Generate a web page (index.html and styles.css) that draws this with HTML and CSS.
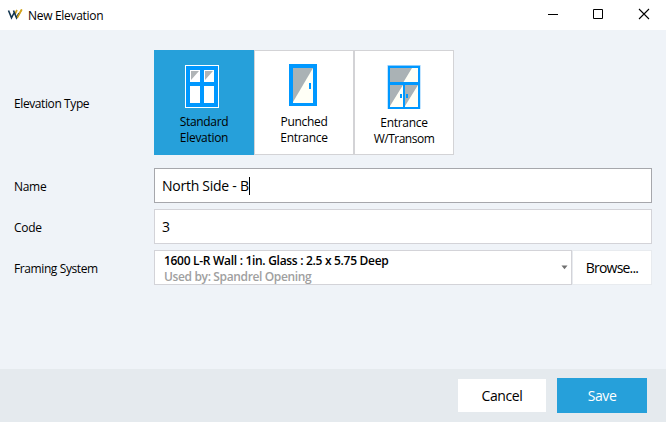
FILE: index.html
```html
<!DOCTYPE html>
<html lang="en">
<head>
<meta charset="utf-8">
<title>New Elevation</title>
<link rel="stylesheet" href="styles.css">
</head>
<body>
<div class="window">
  <header class="titlebar">
    <svg class="logo" width="16" height="12" viewBox="0 0 16 12" fill="none">
      <path d="M10 10L14.800 1.500M8 6L10 2" stroke="#d2a51e" stroke-width="1.7"/>
      <path d="M1.500 2.500L4.500 9.800L7.500 4M6.500 2.500L9.500 9.800L12 5" stroke="#12354f" stroke-width="1.6"/>
      <path d="M10.200 9.500L14.700 1.500" stroke="#d2a51e" stroke-width="1.5"/>
    </svg>
    <h1 class="title"><span class="t-title">New Elevation</span></h1>
    <div class="controls">
      <svg width="46" height="30" viewBox="0 0 46 30"><path d="M18 14.500H28" stroke="#000"/></svg>
      <svg width="46" height="30" viewBox="0 0 46 30"><path d="M17.500 9.500H26.500V18.500H17.500Z" fill="none" stroke="#000"/></svg>
      <svg width="44" height="30" viewBox="0 0 44 30"><path d="M17 9L27 19M27 9L17 19" stroke="#000" stroke-width="1.1"/></svg>
    </div>
  </header>
  <main class="form">
    <div class="row row-types">
      <span class="label"><span class="t-type">Elevation Type</span></span>
      <div class="tiles">
        <button class="tile selected">
          <svg width="40" height="46" viewBox="0 0 40 46">
            <path d="M1 1H35V44H1Z" fill="#fff"/><path d="M2 2H34V43H2Z" fill="#0098ff"/>
            <path d="M6 6H16V18H6ZM20 6H30V18H20ZM6 22H16V39H6ZM20 22H30V39H20Z" fill="#fff"/>
            <path d="M7 7H15L7 16ZM21 7H29L21 16Z" fill="#b0b4b6"/>
          </svg>
          <span class="caption"><span class="t-std">Standard</span><br><span class="t-elev">Elevation</span></span>
        </button>
        <button class="tile">
          <svg width="38" height="46" viewBox="0 0 38 46">
            <path d="M4 0H32V42H4Z" fill="#0098ff"/><path d="M8 4H28V39H8Z" fill="#fffff6"/>
            <path d="M8 4H28L8 38Z" fill="#aab2b5"/><path d="M24 19H26V25H24Z" fill="#0098ff"/>
          </svg>
          <span class="caption"><span class="t-punch">Punched</span><br><span class="t-entr">Entrance</span></span>
        </button>
        <button class="tile tile-transom">
          <svg width="36" height="46" viewBox="0 0 36 46">
            <path d="M1.500 1H34.500V45H1.500Z" fill="#8accff"/><path d="M2 2H34V45H2Z" fill="#0098ff"/>
            <path d="M4 4H32V18H4ZM4 21H17V43H4ZM19 21H32V43H19Z" fill="#fffff6"/>
            <path d="M4 4H26L17.500 18H4ZM4 21H17L4 42ZM19 21H32L19 42Z" fill="#aab2b5"/>
            <path d="M14 30H16V34H14ZM20 30H22V34H20Z" fill="#0098ff"/>
          </svg>
          <span class="caption"><span class="t-entr">Entrance</span><br><span class="t-trans">W/Transom</span></span>
        </button>
      </div>
    </div>
    <div class="row">
      <span class="label"><span class="t-name">Name</span></span>
      <div class="field focused"><span class="t-north">North Side - B</span><i class="caret"></i></div>
    </div>
    <div class="row">
      <span class="label"><span class="t-code">Code</span></span>
      <div class="field"><span>3</span></div>
    </div>
    <div class="row">
      <span class="label"><span class="t-frame">Framing System</span></span>
      <div class="select">
        <div class="system"><span class="t-sys">1600 L-R Wall : 1in. Glass : 2.5 x 5.75 Deep</span><br><span class="used t-used">Used by: Spandrel Opening</span></div>
        <svg width="7" height="5" viewBox="0 0 7 5"><path d="M0.500 0.500H6.500L3.500 4.300Z" fill="#707070"/></svg>
      </div>
      <button class="browse"><span class="t-browse">Browse...</span></button>
    </div>
  </main>
  <footer class="footer">
    <button class="btn cancel"><span class="t-cancel">Cancel</span></button>
    <button class="btn save"><span class="t-save">Save</span></button>
  </footer>
</div>
</body>
</html>
```
FILE: styles.css
```css
* { box-sizing: border-box; }
body { margin: 0; font: 12px/16px "Open Sans", "Noto Sans", sans-serif; color: #000; }
button { font: inherit; color: inherit; border: 0; padding: 0; border-radius: 0; margin: 0; }
svg { display: block; flex: none; }
span { white-space: nowrap; }
.window { width: 666px; height: 422px; background: #eff3f8; display: flex; flex-direction: column; }
.titlebar { height: 30px; background: #fff; display: flex; align-items: center; padding-left: 7px; flex: none; }
.logo { margin-right: 5px; margin-top: -3px; }
.title { margin: 0; padding-top: 1px; font: inherit; flex: 1; }
.controls { display: flex; }
.form { flex: 1; padding: 20px 14px 0; }
.row { display: flex; align-items: center; height: 35px; margin-bottom: 6px; }
.row-types { height: 105px; margin-bottom: 13px; }
.label { width: 140px; flex: none; padding-top: 3px; }
.tiles { display: flex; height: 105px; }
.tile { width: 100px; height: 105px; background: #fff; border: 1px solid #d3d3d6; display: flex; flex-direction: column; align-items: center; padding-top: 13px; }
.tile.selected { background: #26a0da; border-color: #26a0da; }
.caption { text-align: center; margin-top: 4px; }
.tile-transom .caption { margin-top: 5px; }
.field { flex: 1; height: 35px; background: #fff; border: 1px solid #d3d3d8; display: flex; align-items: center; padding: 1px 0 0 7px; font-size: 14px; }
.focused { border-color: #a6a7ac; }
.caret { width: 1px; height: 18px; background: #000; }
.select { width: 418px; height: 35px; background: #fff; border: 1px solid #d3d3d8; display: flex; align-items: center; justify-content: space-between; padding: 0 3px 0 9px; }
.system { font-weight: 600; padding-top: 2px; }
.used { color: #a0a0a0; }
.browse { flex: 1; height: 35px; background: #fff; border: 1px solid #e8ebef; font-size: 14px; }
.footer { height: 53px; background: #e5eaee; display: flex; align-items: center; justify-content: flex-end; gap: 11px; padding: 0 19px 0 0; flex: none; }
.btn { font-size: 14px; padding-top: 1px; }
.cancel { width: 88px; height: 33px; background: #fff; }
.save { width: 90px; height: 35px; background: #26a0da; color: #fff; }
.t-title, .t-name, .t-code, .t-std, .t-elev, .t-punch, .t-entr { letter-spacing: -0.3px; }
.t-type, .t-frame { letter-spacing: -0.4px; }
.t-trans { letter-spacing: -0.5px; }
.t-north { letter-spacing: -0.26px; }
.t-cancel, .t-save { letter-spacing: -0.4px; }
.t-browse { letter-spacing: -0.8px; }
.t-sys { letter-spacing: -0.3px; }
.t-used { letter-spacing: -0.36px; }
```
